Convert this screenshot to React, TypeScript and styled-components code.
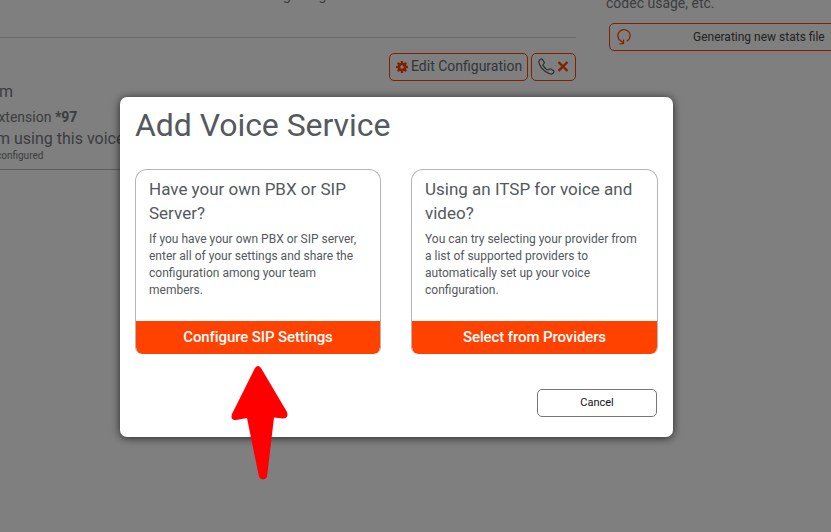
import React from "react";
import styled, { createGlobalStyle } from "styled-components";

const GlobalStyle = createGlobalStyle`
  * { box-sizing: border-box; }
  body { margin: 0; background: #fff; overflow: hidden; }
  body, button { font-family: Roboto, "Liberation Sans", sans-serif; }
  h1, h2, p { margin: 0; font-weight: 400; }
`;

const Page = styled.div`
  position: relative;
  display: flex;
  gap: 30px;
  width: 831px;
  height: 532px;
  overflow: hidden;
  color: #777a7d;
`;

const Services = styled.main`
  width: 576px;
  flex: none;
`;

const Intro = styled.div`
  height: 38px;
  border-bottom: 1px solid #d8d8cf;
  overflow: hidden;
`;

const IntroText = styled.p`
  margin: -13px 0 0 283px;
  font-size: 14px;
  line-height: 16px;
`;

const ServicePanel = styled.section`
  height: 132px;
  border-bottom: 1px solid #bbb;
`;

const Actions = styled.div`
  display: flex;
  justify-content: flex-end;
  gap: 3px;
  padding-top: 15px;
`;

const OutlineButton = styled.button<{ $width: number }>`
  display: flex;
  align-items: center;
  gap: 3px;
  width: ${(p) => p.$width}px;
  height: 28px;
  padding: 0 5px 1px 6px;
  border: 1px solid #ff4200;
  border-radius: 5px;
  background: transparent;
  color: #676b6f;
  font-size: 14px;
  white-space: nowrap;
  svg { flex: none; }
`;

const ButtonLabel = styled.span`
  padding-bottom: 2px;
`;

const Line = styled.p<{ $size: number; $height: number; $shift?: number }>`
  margin-left: ${(p) => p.$shift ?? 0}px;
  font-size: ${(p) => p.$size}px;
  line-height: ${(p) => p.$height}px;
  white-space: nowrap;
`;

const Aside = styled.aside`
  width: 260px;
  flex: none;
`;

const AsideText = styled.p`
  margin-top: -6px;
  font-size: 14px;
  line-height: 18px;
`;

const StatsButton = styled.button`
  display: flex;
  align-items: center;
  width: 240px;
  height: 28px;
  margin: 11px 0 0 3px;
  padding: 0 0 0 7px;
  border: 1px solid #ff4200;
  border-radius: 5px;
  background: transparent;
  color: #444;
  font-size: 12px;
  white-space: nowrap;
  span { margin-left: 62px; }
`;

const Overlay = styled.div`
  position: absolute;
  inset: 0;
  padding: 97px 0 0 120px;
  background: rgba(0, 0, 0, 0.5);
`;

const Dialog = styled.section`
  display: flex;
  flex-direction: column;
  width: 553px;
  height: 340px;
  padding: 8px 15px 20px;
  border-radius: 7px;
  background: #fff;
  box-shadow: 0 1px 8px rgba(0, 0, 0, 0.7);
  color: #53595c;
`;

const Title = styled.h1`
  font-size: 32px;
  line-height: 40px;
  letter-spacing: -0.06px;
`;

const Cards = styled.div`
  display: flex;
  justify-content: space-between;
  margin-top: 24px;
`;

const Card = styled.article<{ $width: number }>`
  display: flex;
  flex-direction: column;
  width: ${(p) => p.$width}px;
  height: 185px;
  border: 1px solid #b5b5b5;
  border-bottom: 0;
  border-radius: 12px 12px 7px 7px;
  overflow: hidden;
`;

const CardBody = styled.div`
  flex: 1;
  padding: 7px 12px 0 13px;
`;

const CardTitle = styled.h2`
  font-size: 17px;
  line-height: 24px;
`;

const CardText = styled.p`
  margin-top: 6px;
  font-size: 12px;
  line-height: 17px;
`;

const CardButton = styled.button`
  height: 33px;
  padding: 0 0 2px;
  border: 0;
  border-radius: 0 0 6px 6px;
  background: #ff4200;
  color: #fff;
  font-size: 15px;
  font-weight: 500;
  letter-spacing: -0.1px;
`;

const CancelButton = styled.button`
  align-self: flex-end;
  width: 120px;
  height: 28px;
  margin: 35px 1px 0 0;
  padding: 0 0 2px;
  border: 1px solid #777;
  border-radius: 5px;
  background: #fff;
  color: #111;
  font-size: 11px;
`;

const Pointer = styled.svg`
  position: absolute;
  left: 225px;
  top: 360px;
`;

const GearIcon = () => (
  <svg width="12" height="12" viewBox="-6 -6 12 12" fill="#ff4200">
    {[0, 45, 90, 135].map((angle) => (
      <rect key={angle} x="-1.2" y="-6" width="2.4" height="12" rx="0.4" transform={`rotate(${angle})`} />
    ))}
    <circle r="4.2" />
    <circle r="1.7" fill="#fff" />
  </svg>
);

const PhoneIcon = () => (
  <svg width="17" height="17" viewBox="0 0 17 17" fill="none" stroke="#4d5356" strokeWidth="1.1" strokeLinejoin="round">
    <path d="M1.1 2.7 2.6 1.2Q3.5.5 4.3 1.4L6.2 4.2Q6.6 4.9 6 5.5L5.1 6.5Q4.8 7 5.2 7.6 6.8 10.3 9.5 11.9 10.1 12.2 10.6 11.8L11.5 10.9Q12.1 10.5 12.8 10.9L15.6 12.7Q16.4 13.3 15.8 14.2L14.4 15.8Q12.9 16.7 10 15.1 4.2 12 1.7 6.7.4 4 1.1 2.7Z" />
  </svg>
);

const CrossIcon = () => (
  <svg width="11" height="11" viewBox="0.5 0 11 11" stroke="#ff4200" strokeWidth="2.4">
    <path d="m1 1 9 9M10 1l-9 9" />
  </svg>
);

const RefreshIcon = () => (
  <svg width="14" height="16" viewBox="0 0 14 16" fill="none" stroke="#ff4200" strokeWidth="1.2">
    <path d="M9.8 12.2A6.1 6.1 0 1 0 4 12.1L6.2 13.6M6.6 10.4V14.4L2.2 15" />
  </svg>
);

const options = [
  {
    width: 246,
    title: ["Have your own PBX or SIP", "Server?"],
    text: ["If you have your own PBX or SIP server,", "enter all of your settings and share the", "configuration among your team", "members."],
    action: "Configure SIP Settings",
  },
  {
    width: 247,
    title: ["Using an ITSP for voice and", "video?"],
    text: ["You can try selecting your provider from", "a list of supported providers to", "automatically set up your voice", "configuration."],
    action: "Select from Providers",
  },
];

const withBreaks = (lines: string[]) =>
  lines.map((line, i) => (
    <React.Fragment key={line}>
      {i > 0 && <br />}
      {line}
    </React.Fragment>
  ));

export default function App() {
  return (
    <>
      <GlobalStyle />
      <Page>
        <Services>
          <Intro>
            <IntroText>getting</IntroText>
          </Intro>
          <ServicePanel>
            <Actions>
              <OutlineButton $width={139}><GearIcon /><ButtonLabel>Edit Configuration</ButtonLabel></OutlineButton>
              <OutlineButton $width={45}><PhoneIcon /><CrossIcon /></OutlineButton>
            </Actions>
            <Line $size={16} $height={22} $shift={-1}>m</Line>
            <Line $size={14} $height={28} $shift={-9}>extension <b>*97</b></Line>
            <Line $size={16} $height={16} $shift={-4}>m using this voice</Line>
            <Line $size={10} $height={18} $shift={-4}>configured</Line>
          </ServicePanel>
        </Services>
        <Aside>
          <AsideText>codec usage, etc.</AsideText>
          <StatsButton><RefreshIcon /><span>Generating new stats file</span></StatsButton>
        </Aside>
        <Overlay>
          <Dialog role="dialog" aria-label="Add Voice Service">
            <Title>Add Voice Service</Title>
            <Cards>
              {options.map((o) => (
                <Card key={o.action} $width={o.width}>
                  <CardBody>
                    <CardTitle>{withBreaks(o.title)}</CardTitle>
                    <CardText>{withBreaks(o.text)}</CardText>
                  </CardBody>
                  <CardButton>{o.action}</CardButton>
                </Card>
              ))}
            </Cards>
            <CancelButton>Cancel</CancelButton>
          </Dialog>
        </Overlay>
        <Pointer width="70" height="125" viewBox="0 0 70 125" fill="#f00">
          <path d="M30 8Q33 4 36 8L62 52Q64 58 58 58.5L49 57.5 42 117Q38 122 34 117L22 58 11 60Q5 60 7 54Z" />
        </Pointer>
      </Page>
    </>
  );
}
